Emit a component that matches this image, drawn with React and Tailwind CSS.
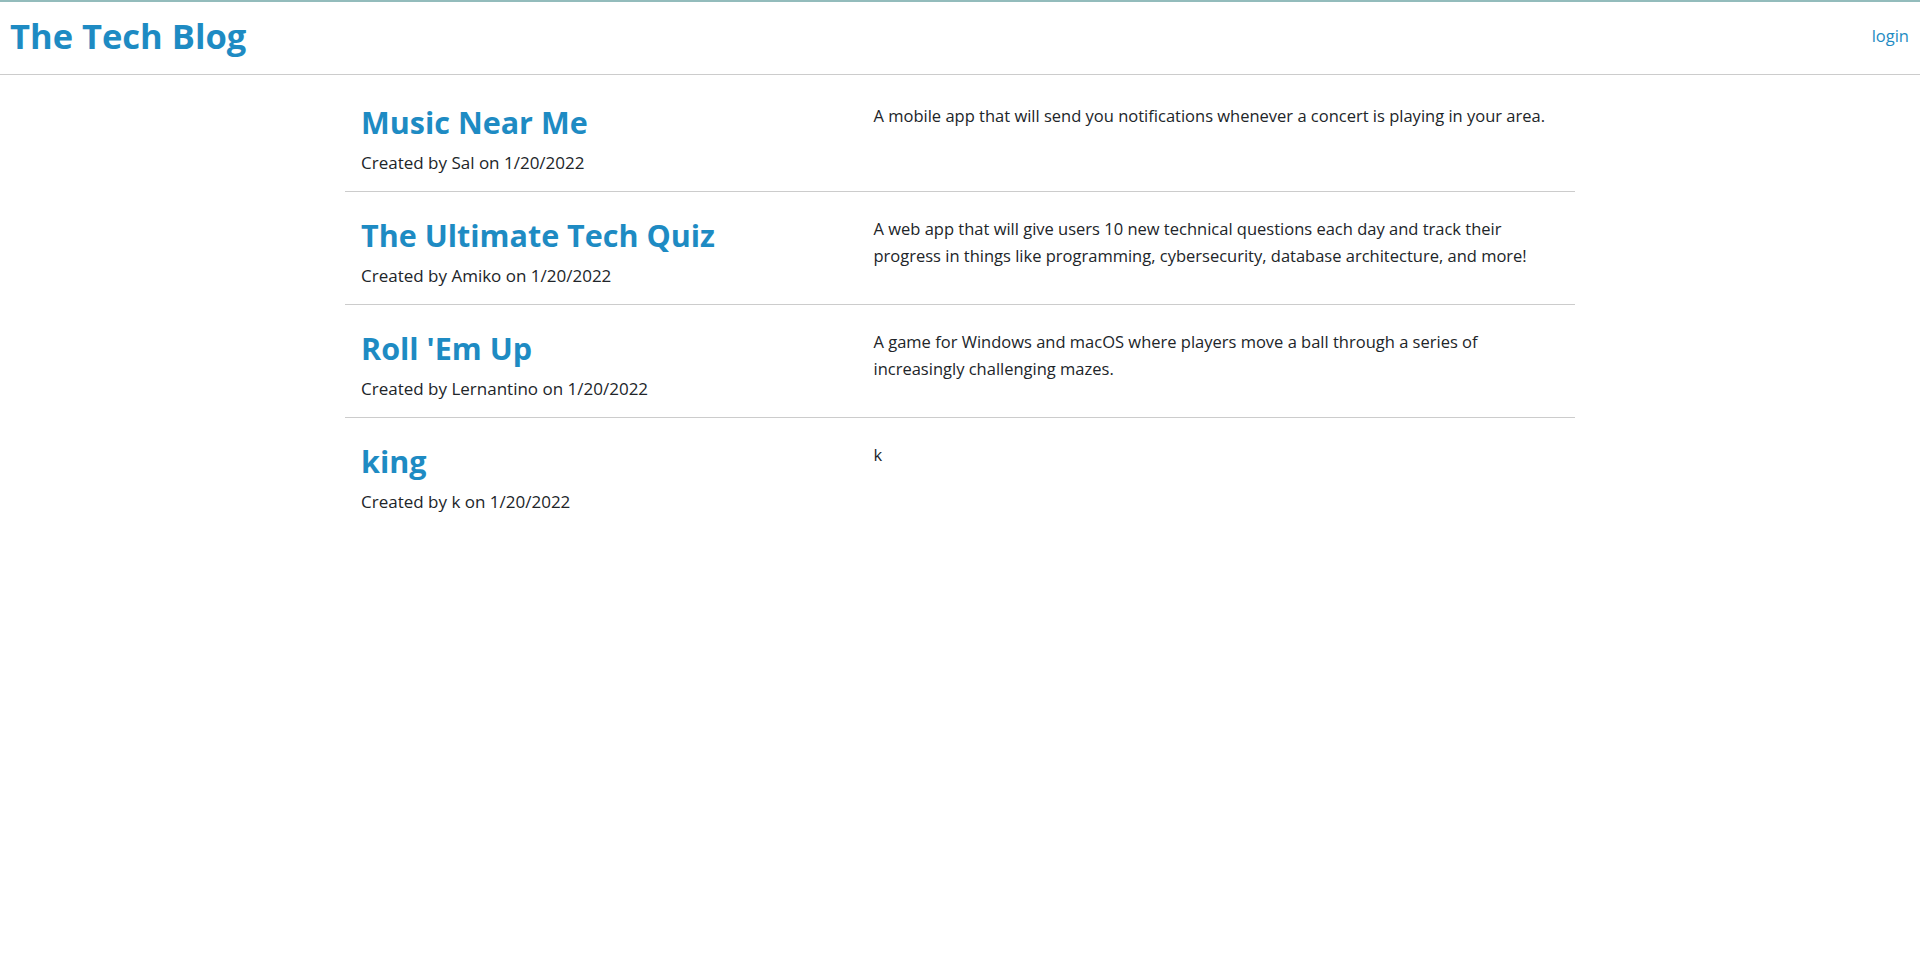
import React from "react";

const posts = [
  {
    title: "Music Near Me",
    author: "Sal",
    date: "1/20/2022",
    body: "A mobile app that will send you notifications whenever a concert is playing in your area.",
  },
  {
    title: "The Ultimate Tech Quiz",
    author: "Amiko",
    date: "1/20/2022",
    body: "A web app that will give users 10 new technical questions each day and track their progress in things like programming, cybersecurity, database architecture, and more!",
  },
  {
    title: "Roll 'Em Up",
    author: "Lernantino",
    date: "1/20/2022",
    body: "A game for Windows and macOS where players move a ball through a series of increasingly challenging mazes.",
  },
  {
    title: "king",
    author: "k",
    date: "1/20/2022",
    body: "k",
  },
];

const App = () => {
  return (
    <div className="min-h-screen bg-white text-[#212529] font-['Open_Sans',sans-serif]">
      <header className="flex items-center justify-between border-t-2 border-t-[#93bcbc] border-b border-b-[#cccccc] h-[75px] pl-[10px] pr-[11px]">
        <h1 className="text-[34.5px] font-bold text-[#1e8bc3] leading-none pb-[3px]">The Tech Blog</h1>
        <a href="#" className="text-[16.5px] text-[#1e8bc3] pb-[3px]">login</a>
      </header>

      <main className="max-w-[1230px] mx-auto pt-[4px]">
        {posts.map((post, i) => (
          <div
            key={i}
            className={`flex pt-[22px] pb-[15px] ${i < posts.length - 1 ? "border-b border-[#cccccc]" : ""}`}
          >
            <div className="w-5/12 px-4">
              <h2 className="text-[30.5px] font-bold leading-[42px] text-[#1e8bc3]">{post.title}</h2>
              <p className="text-[17px] leading-[27px] mt-[6px]">
                Created by {post.author} on {post.date}
              </p>
            </div>
            <div className="w-7/12 px-4 pt-[1px]">
              <p className="text-[16.5px] leading-[27px]">{post.body}</p>
            </div>
          </div>
        ))}
      </main>
    </div>
  );
};

export default App;
